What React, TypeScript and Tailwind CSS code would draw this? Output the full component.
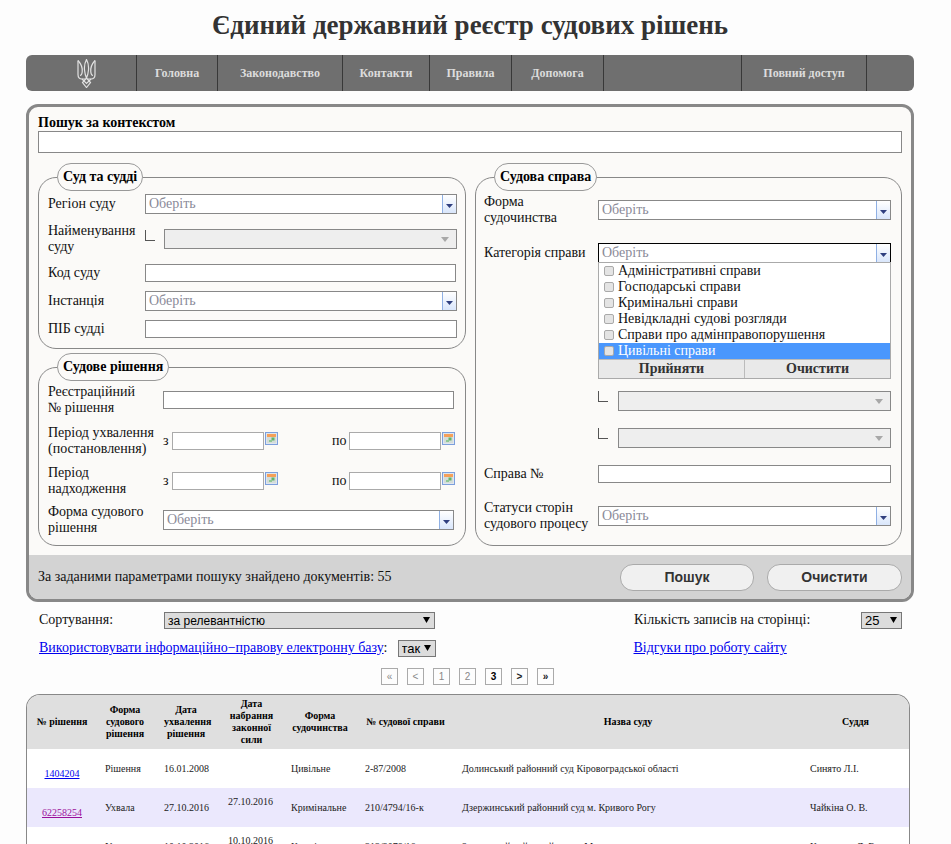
import * as React from "react";

const navItems = [
  { w: "w-[111px]", logo: true },
  { w: "w-[81px]", label: "Головна" },
  { w: "w-[125px]", label: "Законодавство" },
  { w: "w-[87px]", label: "Контакти" },
  { w: "w-[82px]", label: "Правила" },
  { w: "w-[92px]", label: "Допомога" },
  { w: "w-[138px]" },
  { w: "w-[125px]", label: "Повний доступ" },
];

const categories = [
  "Адміністративні справи",
  "Господарські справи",
  "Кримінальні справи",
  "Невідкладні судові розгляди",
  "Справи про адмінправопорушення",
  "Цивільні справи",
];

const rows = [
  { id: "1404204", form: "Рішення", date: "16.01.2008", legal: "", kind: "Цивільне", no: "2-87/2008", court: "Долинський районний суд Кіровоградської області", judge: "Синято Л.І.", visited: false },
  { id: "62258254", form: "Ухвала", date: "27.10.2016", legal: "27.10.2016", kind: "Кримінальне", no: "210/4794/16-к", court: "Дзержинський районний суд м. Кривого Рогу", judge: "Чайкіна О. В.", visited: true },
  { id: "61998231", form: "Ухвала", date: "10.10.2016", legal: "10.10.2016", kind: "Кримінальне", no: "212/3078/16-к", court: "Заводський районний суд м. Миколаєва", judge: "Кузнєцова Л. В.", visited: false },
];

function Trident() {
  return (
    <svg width="19" height="29" viewBox="0 0 19 29" fill="none" stroke="#e2e2e2" strokeWidth="1.2" className="ml-[10px]">
      <path d="M1 1.5V15.5Q1 20 5 20H8" />
      <path d="M18 1.5V15.5Q18 20 14 20H11" />
      <path d="M1 1.5Q6 7 5.2 13Q4.8 16.5 3 16.5" />
      <path d="M18 1.5Q13 7 13.8 13Q14.2 16.5 16 16.5" />
      <path d="M9.5 .5Q7 5 7.5 11Q8 16 9.5 19Q11 16 11.5 11Q12 5 9.5 .5Z" />
      <path d="M9.5 19L5.5 23.5L9.5 28.5L13.5 23.5Z" />
      <path d="M5 20L9.5 24.5L14 20" />
    </svg>
  );
}

function CalendarIcon() {
  return (
    <svg width="13" height="13" viewBox="0 0 13 13" className="shrink-0 -mt-[5px]">
      <rect x=".5" y=".5" width="12" height="12" fill="#dfe6ee" stroke="#7c9fdc" />
      <rect x="2" y="2" width="9" height="3" fill="#f5a05a" />
      <rect x="2" y="5" width="9" height="6" fill="#d4dcd8" />
      <rect x="6.5" y="5.5" width="3" height="3" fill="#62b46a" />
      <rect x="4" y="8" width="3" height="2" fill="#8fc894" />
    </svg>
  );
}

function Corner() {
  return <div className="w-[10px] h-[11px] border-l border-b border-[#555] shrink-0" />;
}

// kendo-style dropdown with the small blue arrow button
function Picker({ className = "", focused = false }: { className?: string; focused?: boolean }) {
  return (
    <div className={`h-[20px] flex items-stretch bg-white border ${focused ? "border-black" : "border-[#888]"} ${className}`}>
      <span className="flex-1 pl-[3px] leading-[18px] text-[#8a8a98]">Оберіть</span>
      <span className="w-[14px] border-l border-[#8fb0e4] bg-gradient-to-b from-white to-[#d9e6fb] flex items-center justify-center pt-[3px]">
        <svg width="7" height="4" viewBox="0 0 7 4"><path d="M0 0H7L3.5 4Z" fill="#2f3f7f" /></svg>
      </span>
    </div>
  );
}

function DisabledPicker({ className = "" }: { className?: string }) {
  return (
    <div className={`h-[20px] flex items-center justify-end pr-[7px] bg-[#eee] border border-[#888] ${className}`}>
      <svg width="8" height="5" viewBox="0 0 8 5"><path d="M0 0H8L4 5Z" fill="#a8a8a8" /></svg>
    </div>
  );
}

function TextInput({ className = "" }: { className?: string }) {
  return <input type="text" className={`h-[18px] bg-white border border-[#888] outline-none ${className}`} />;
}

function GraySelect({ value, className = "", textClass = "text-[13px]" }: { value: string; className?: string; textClass?: string }) {
  return (
    <div className={`relative h-[17px] ${className}`}>
      <select className={`appearance-none block w-full h-full pl-[3px] border border-[#777] bg-[#dcdcdc] ${textClass} [font-family:'Liberation_Sans',sans-serif] text-black`}>
        <option>{value}</option>
      </select>
      <svg width="7" height="6" viewBox="0 0 7 6" className="absolute right-[5px] top-[5px] pointer-events-none"><path d="M0 0H7L3.5 6Z" fill="#000" /></svg>
    </div>
  );
}

function Group({ title, className = "", legendClass = "", children }: { title: string; className?: string; legendClass?: string; children: React.ReactNode }) {
  return (
    <fieldset className={`border border-[#888] rounded-[18px] ${className}`}>
      <legend className={`h-[28px] px-[5px] border border-[#999] rounded-[14px] bg-[#fbfaf8] font-bold leading-[25px] text-black ${legendClass}`}>{title}</legend>
      {children}
    </fieldset>
  );
}

function DateRange() {
  return (
    <div className="flex items-center">
      <span className="w-[9px]">з</span>
      <TextInput className="w-[92px] border-[#aaa]" />
      <span className="ml-px"><CalendarIcon /></span>
      <span className="ml-[54px] w-[17px]">по</span>
      <TextInput className="w-[92px] border-[#aaa]" />
      <span className="ml-px"><CalendarIcon /></span>
    </div>
  );
}

function PageBox({ children, active = false, muted = false }: { children: React.ReactNode; active?: boolean; muted?: boolean }) {
  return (
    <span className={`w-[17px] h-[17px] flex items-center justify-center border border-[#aaa] text-[10px] [font-family:'Liberation_Sans',sans-serif] ${active ? "font-bold text-black" : muted ? "text-[#888]" : "font-bold text-[#222]"}`}>
      {children}
    </span>
  );
}

export default function App() {
  return (
    <div className="h-screen overflow-hidden bg-[#fdfdfd] [font-family:'Liberation_Serif',serif] text-[14px] leading-[16px] text-[#111]">
      <div className="w-[888px] ml-[26px]">
        <h1 className="h-[55px] pt-[10px] text-center text-[27px] leading-[30px] font-bold text-[#333]">Єдиний державний реєстр судових рішень</h1>

        <nav className="h-[36px] flex rounded-[6px] bg-[#6f6f6f] text-[12px] font-bold text-[#dcdcdc]">
          {navItems.map((item, i) => (
            <div key={i} className={`${item.w} flex items-center justify-center border-r border-[#383838]`}>
              {item.logo ? <Trident /> : item.label}
            </div>
          ))}
        </nav>

        <section className="mt-[13px] border-[3px] border-[#888] rounded-[12px] bg-[#fbfaf8] overflow-hidden">
          <div className="px-[9px] pt-[8px]">
            <div className="font-bold text-black">Пошук за контекстом</div>
            <input type="text" className="block w-full h-[22px] bg-white border border-[#888] outline-none" />
          </div>

          <div className="flex gap-[9px] px-[9px] mt-[10px]">
            <div className="w-[428px] flex flex-col gap-[4px]">
              <Group title="Суд та судді" className="pl-[9px] pr-[8px] pb-[10px]" legendClass="ml-[9px]">
                <div className="mt-[3px] flex items-center h-[20px]">
                  <span className="w-[97px] shrink-0">Регіон суду</span>
                  <Picker className="flex-1" />
                </div>
                <div className="mt-[9px] flex items-center h-[32px]">
                  <span className="w-[97px] shrink-0">Найменування суду</span>
                  <div className="-mt-[8px]"><Corner /></div>
                  <DisabledPicker className="flex-1 ml-[9px]" />
                </div>
                <div className="mt-[9px] flex items-center h-[18px]">
                  <span className="w-[97px] shrink-0">Код суду</span>
                  <TextInput className="w-[311px]" />
                </div>
                <div className="mt-[9px] flex items-center h-[20px]">
                  <span className="w-[97px] shrink-0">Інстанція</span>
                  <Picker className="flex-1" />
                </div>
                <div className="mt-[9px] flex items-center h-[18px]">
                  <span className="w-[97px] shrink-0">ПІБ судді</span>
                  <TextInput className="flex-1" />
                </div>
              </Group>

              <Group title="Судове рішення" className="pl-[9px] pr-[8px] pb-[9px]" legendClass="ml-[9px]">
                <div className="mt-[3px] flex items-center h-[32px]">
                  <span className="w-[115px] shrink-0">Реєстраційний<br />№ рішення</span>
                  <TextInput className="w-[291px]" />
                </div>
                <div className="mt-[9px] flex items-center h-[32px]">
                  <span className="w-[115px] shrink-0">Період ухвалення (постановлення)</span>
                  <DateRange />
                </div>
                <div className="mt-[8px] flex items-center h-[32px]">
                  <span className="w-[115px] shrink-0">Період надходження</span>
                  <DateRange />
                </div>
                <div className="mt-[7px] flex items-center h-[32px]">
                  <span className="w-[115px] shrink-0">Форма судового рішення</span>
                  <Picker className="w-[291px]" />
                </div>
              </Group>
            </div>

            <Group title="Судова справа" className="w-[427px] pl-[8px] pr-[10px] pb-[13px]" legendClass="ml-[10px]">
              <div className="mt-[3px] flex items-center h-[32px]">
                <span className="w-[114px] shrink-0">Форма судочинства</span>
                <Picker className="w-[293px]" />
              </div>
              <div className="mt-[17px] flex items-center h-[20px]">
                <span className="w-[114px] shrink-0">Категорія справи</span>
                <div className="relative w-[293px]">
                  <Picker focused />
                  <div className="absolute left-0 right-0 top-[19px] z-10 bg-white border border-[#aaa]">
                    {categories.map((c, i) => (
                      <label key={c} className={`flex items-center h-[16px] pl-[5px] ${i === 5 ? "bg-[#4a97fd] text-white" : "text-[#111]"}`}>
                        <input type="checkbox" className="appearance-none w-[10px] h-[10px] mr-[4px] rounded-[2px] border border-[#aaa] bg-[#e4e4e4]" />
                        {c}
                      </label>
                    ))}
                    <div className="flex h-[19px] bg-[#e9e9e9] border-t border-[#bbb] font-bold text-[#333]">
                      <span className="w-[146px] flex items-center justify-center border-r border-[#bbb]">Прийняти</span>
                      <span className="flex-1 flex items-center justify-center">Очистити</span>
                    </div>
                  </div>
                </div>
              </div>
              <div className="mt-[128px] ml-[114px] flex">
                <Corner />
                <DisabledPicker className="flex-1 ml-[10px]" />
              </div>
              <div className="mt-[17px] ml-[114px] flex">
                <Corner />
                <DisabledPicker className="flex-1 ml-[10px]" />
              </div>
              <div className="mt-[17px] flex items-center h-[18px]">
                <span className="w-[114px] shrink-0">Справа №</span>
                <TextInput className="w-[293px]" />
              </div>
              <div className="mt-[17px] flex items-center h-[32px]">
                <span className="w-[114px] shrink-0">Статуси сторін судового процесу</span>
                <Picker className="w-[293px]" />
              </div>
            </Group>
          </div>

          <div className="mt-[9px] h-[44px] bg-[#d3d3d3] flex items-center px-[9px]">
            <span className="flex-1">За заданими параметрами пошуку знайдено документів: 55</span>
            <button className="w-[134px] h-[27px] rounded-[13px] border border-[#aaa] bg-[#f0f0f0] [font-family:'Liberation_Sans',sans-serif] font-bold text-[#333]">Пошук</button>
            <button className="w-[135px] h-[27px] ml-[13px] rounded-[13px] border border-[#aaa] bg-[#f0f0f0] [font-family:'Liberation_Sans',sans-serif] font-bold text-[#333]">Очистити</button>
          </div>
        </section>

        <div className="mt-[9px] -mr-[1px] flex h-[18px] items-center pl-[13px]">
          <span className="w-[125px]">Сортування:</span>
          <GraySelect value="за релевантністю" className="w-[271px]" textClass="text-[12px]" />
          <span className="ml-[199px] w-[227px]">Кількість записів на сторінці:</span>
          <GraySelect value="25" className="w-[41px]" />
        </div>

        <div className="mt-[10px] flex h-[18px] items-center pl-[13px]">
          <span><a href="#" className="text-[#0000ee] underline">Використовувати інформаційно−правову електронну базу</a>:</span>
          <GraySelect value="так" className="ml-[10px] w-[38px]" />
          <a href="#" className="ml-[198px] text-[#0000ee] underline">Відгуки про роботу сайту</a>
        </div>

        <div className="mt-[11px] ml-[355px] flex gap-[9px]">
          <PageBox muted>«</PageBox>
          <PageBox muted>&lt;</PageBox>
          <PageBox muted>1</PageBox>
          <PageBox muted>2</PageBox>
          <PageBox active>3</PageBox>
          <PageBox>&gt;</PageBox>
          <PageBox>»</PageBox>
        </div>

        <div className="mt-[9px] w-[884px] border border-b-0 border-[#888] rounded-t-[14px] overflow-hidden bg-white text-[10px] leading-[12px] text-[#222]">
          <table className="w-full table-fixed border-collapse">
            <colgroup>
              <col className="w-[70px]" />
              <col className="w-[59px]" />
              <col className="w-[64px]" />
              <col className="w-[63px]" />
              <col className="w-[74px]" />
              <col className="w-[97px]" />
              <col className="w-[348px]" />
              <col />
            </colgroup>
            <thead>
              <tr className="h-[54px] bg-[#dfdfdf] font-bold text-black">
                <th className="px-[2px]">№ рішення</th>
                <th className="pl-[2px] pr-[5px]">Форма судового рішення</th>
                <th className="pl-[8px] pr-[12px]">Дата ухвалення рішення</th>
                <th className="px-[2px]">Дата набрання законної сили</th>
                <th className="px-[2px]">Форма судочинства</th>
                <th className="px-[2px]">№ судової справи</th>
                <th className="px-[8px]">Назва суду</th>
                <th className="px-[8px]">Суддя</th>
              </tr>
            </thead>
            <tbody>
              {rows.map((r, i) => (
                <tr key={r.id} className={`h-[39px] ${i === 1 ? "bg-[#ebe8fd]" : "bg-white"}`}>
                  <td className="text-center pt-[11px]">
                    <a href="#" className={`underline ${r.visited ? "text-[#9b0f9b]" : "text-[#0000ee]"}`}>{r.id}</a>
                  </td>
                  <td className="pl-[8px]">{r.form}</td>
                  <td className="pl-[8px]">{r.date}</td>
                  <td className="pl-[8px] pb-[12px]">{r.legal}</td>
                  <td className="pl-[8px]">{r.kind}</td>
                  <td className="pl-[8px]">{r.no}</td>
                  <td className="pl-[8px]">{r.court}</td>
                  <td className="pl-[8px]">{r.judge}</td>
                </tr>
              ))}
            </tbody>
          </table>
        </div>
      </div>
    </div>
  );
}
